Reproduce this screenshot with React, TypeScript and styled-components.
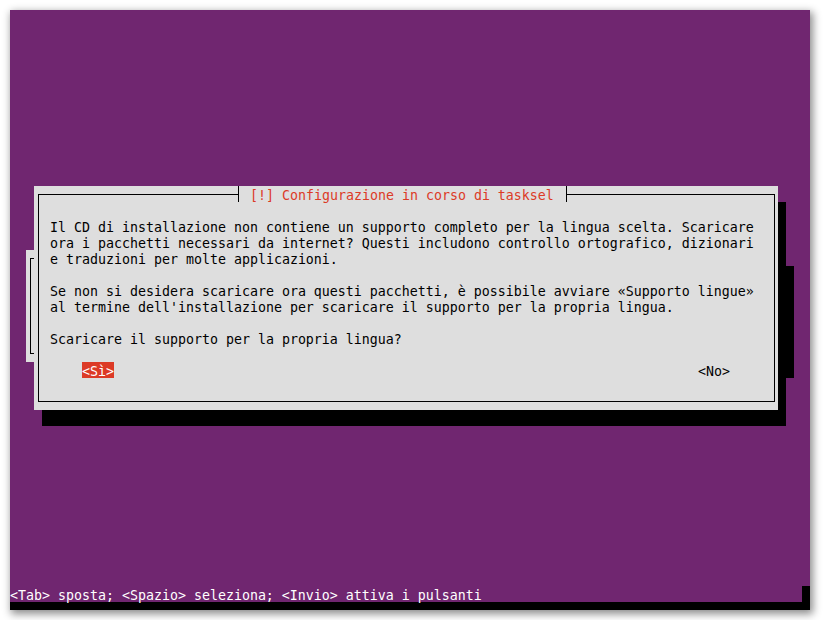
import React from 'react';
import styled, { createGlobalStyle, css } from 'styled-components';

const PURPLE = '#702670';
const GRAY = '#dedede';
const RED = '#dc3a26';

const GlobalStyle = createGlobalStyle`
  html, body { margin: 0; padding: 0; background: #ffffff; }
  body { font-family: "DejaVu Sans Mono", "Liberation Mono", monospace; }
`;

interface Area {
  $col: number;
  $row: number;
  $w?: number;
  $h?: number;
}

const area = (p: Area) => css`
  grid-column: ${p.$col + 1} / span ${p.$w ?? 1};
  grid-row: ${p.$row + 1} / span ${p.$h ?? 1};
`;

const textCell = css`
  box-sizing: border-box;
  padding-top: 1.5px;
  line-height: 16px;
  white-space: pre;
`;

const Page = styled.div`
  padding: 10px;
`;

const Screen = styled.div`
  width: 800px;
  height: 600px;
  background: #000;
  box-shadow: 2px 3px 8px 1px rgba(0, 0, 0, 0.45);
`;

const Term = styled.div`
  display: grid;
  grid-template-columns: repeat(100, 8px);
  grid-template-rows: repeat(37, 16px);
  background: ${PURPLE};
  font-family: "DejaVu Sans Mono", "Liberation Mono", monospace;
  font-size: 13.29px;
`;

const Shadow = styled.div<Area>`
  ${area};
  background: #000;
`;

const Window = styled.div<Area & { $w: number; $h: number }>`
  ${area};
  display: grid;
  grid-template-columns: repeat(${(p) => p.$w}, 8px);
  grid-template-rows: repeat(${(p) => p.$h}, 16px);
  background: ${GRAY};
  color: #000;
`;

const Frame = styled.div`
  grid-column: 1 / -1;
  grid-row: 1 / -1;
  margin: 8px 3px 8px 4px;
  border: 1px solid #000;
`;

const Title = styled.div<Area>`
  ${area};
  ${textCell};
  margin: 0 3px 0 4px;
  padding-left: 3px;
  border-left: 1px solid #000;
  border-right: 1px solid #000;
  background: ${GRAY};
  color: ${RED};
`;

const Message = styled.div<Area>`
  ${area};
  ${textCell};
`;

const Button = styled.div<Area & { $active?: boolean }>`
  ${area};
  ${textCell};
  background: ${(p) => (p.$active ? RED : 'transparent')};
  color: ${(p) => (p.$active ? '#ffffff' : '#000')};
`;

const StatusLine = styled.div<Area>`
  ${area};
  ${textCell};
  color: #ffffff;
`;

const message = [
  'Il CD di installazione non contiene un supporto completo per la lingua scelta. Scaricare',
  'ora i pacchetti necessari da internet? Questi includono controllo ortografico, dizionari',
  'e traduzioni per molte applicazioni.',
  '',
  'Se non si desidera scaricare ora questi pacchetti, è possibile avviare «Supporto lingue»',
  "al termine dell'installazione per scaricare il supporto per la propria lingua.",
  '',
  'Scaricare il supporto per la propria lingua?',
].join('\n');

export default function App() {
  return (
    <>
      <GlobalStyle />
      <Page>
        <Screen>
          <Term>
            {/* window behind the dialog */}
            <Window $col={2} $row={15} $w={95} $h={7}>
              <Frame />
            </Window>
            <Shadow $col={97} $row={16} $h={7} />

            {/* dialog shadow */}
            <Shadow $col={96} $row={12} $h={14} />
            <Shadow $col={4} $row={25} $w={93} />

            {/* dialog */}
            <Window $col={3} $row={11} $w={93} $h={14}>
              <Frame />
              <Title $col={25} $row={0} $w={42}>
                {' [!] Configurazione in corso di tasksel '}
              </Title>
              <Message $col={2} $row={2} $w={89} $h={8}>
                {message}
              </Message>
              <Button $col={6} $row={11} $w={4} $active>
                {'<Sì>'}
              </Button>
              <Button $col={83} $row={11} $w={4}>
                {'<No>'}
              </Button>
            </Window>

            <StatusLine $col={0} $row={36} $w={99}>
              {'<Tab> sposta; <Spazio> seleziona; <Invio> attiva i pulsanti'}
            </StatusLine>
            <Shadow $col={99} $row={36} />
          </Term>
        </Screen>
      </Page>
    </>
  );
}
